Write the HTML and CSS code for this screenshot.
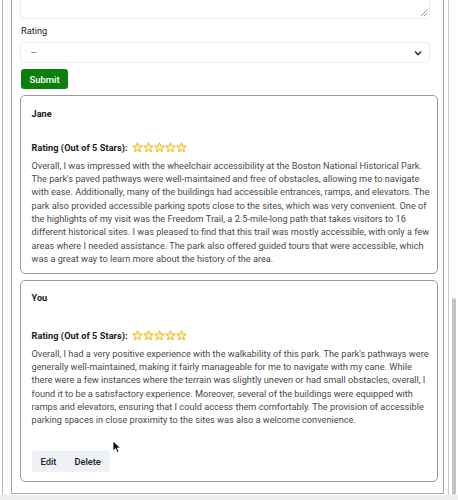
FILE: index.html
```html
<!DOCTYPE html>
<html>
<head>
<meta charset="utf-8">
<link rel="stylesheet" href="styles.css">
</head>
<body>
<div class="window">
  <div class="panel">
    <div class="container">
      <div class="field">
        <div class="textarea"><span class="grip"></span></div>
      </div>
      <label class="label">Rating</label>
      <div class="select">
        <span>--</span>
        <svg class="chev" width="8" height="6" viewBox="0 0 8 6"><path d="M1 1.5 L4 4.5 L7 1.5" fill="none" stroke="#333" stroke-width="1.6"/></svg>
      </div>
      <button class="submit">Submit</button>

      <div class="review">
        <div class="name">Jane</div>
        <div class="rating">Rating (Out of 5 Stars): <span class="stars">
          <svg viewBox="0 0 12 12"><path d="M6 0.8 L7.5 4.2 L11.2 4.5 L8.4 7 L9.2 10.7 L6 8.8 L2.8 10.7 L3.6 7 L0.8 4.5 L4.5 4.2 Z"/></svg><svg viewBox="0 0 12 12"><path d="M6 0.8 L7.5 4.2 L11.2 4.5 L8.4 7 L9.2 10.7 L6 8.8 L2.8 10.7 L3.6 7 L0.8 4.5 L4.5 4.2 Z"/></svg><svg viewBox="0 0 12 12"><path d="M6 0.8 L7.5 4.2 L11.2 4.5 L8.4 7 L9.2 10.7 L6 8.8 L2.8 10.7 L3.6 7 L0.8 4.5 L4.5 4.2 Z"/></svg><svg viewBox="0 0 12 12"><path d="M6 0.8 L7.5 4.2 L11.2 4.5 L8.4 7 L9.2 10.7 L6 8.8 L2.8 10.7 L3.6 7 L0.8 4.5 L4.5 4.2 Z"/></svg><svg viewBox="0 0 12 12"><path d="M6 0.8 L7.5 4.2 L11.2 4.5 L8.4 7 L9.2 10.7 L6 8.8 L2.8 10.7 L3.6 7 L0.8 4.5 L4.5 4.2 Z"/></svg>
        </span></div>
        <p class="text">Overall, I was impressed with the wheelchair accessibility at the Boston National Historical Park.<br>The park's paved pathways were well-maintained and free of obstacles, allowing me to navigate<br>with ease. Additionally, many of the buildings had accessible entrances, ramps, and elevators. The<br>park also provided accessible parking spots close to the sites, which was very convenient. One of<br>the highlights of my visit was the Freedom Trail, a 2.5-mile-long path that takes visitors to 16<br>different historical sites. I was pleased to find that this trail was mostly accessible, with only a few<br>areas where I needed assistance. The park also offered guided tours that were accessible, which<br>was a great way to learn more about the history of the area.</p>
      </div>

      <div class="review review--own">
        <div class="name">You</div>
        <div class="rating">Rating (Out of 5 Stars): <span class="stars">
          <svg viewBox="0 0 12 12"><path d="M6 0.8 L7.5 4.2 L11.2 4.5 L8.4 7 L9.2 10.7 L6 8.8 L2.8 10.7 L3.6 7 L0.8 4.5 L4.5 4.2 Z"/></svg><svg viewBox="0 0 12 12"><path d="M6 0.8 L7.5 4.2 L11.2 4.5 L8.4 7 L9.2 10.7 L6 8.8 L2.8 10.7 L3.6 7 L0.8 4.5 L4.5 4.2 Z"/></svg><svg viewBox="0 0 12 12"><path d="M6 0.8 L7.5 4.2 L11.2 4.5 L8.4 7 L9.2 10.7 L6 8.8 L2.8 10.7 L3.6 7 L0.8 4.5 L4.5 4.2 Z"/></svg><svg viewBox="0 0 12 12"><path d="M6 0.8 L7.5 4.2 L11.2 4.5 L8.4 7 L9.2 10.7 L6 8.8 L2.8 10.7 L3.6 7 L0.8 4.5 L4.5 4.2 Z"/></svg><svg viewBox="0 0 12 12"><path d="M6 0.8 L7.5 4.2 L11.2 4.5 L8.4 7 L9.2 10.7 L6 8.8 L2.8 10.7 L3.6 7 L0.8 4.5 L4.5 4.2 Z"/></svg>
        </span></div>
        <p class="text">Overall, I had a very positive experience with the walkability of this park. The park's pathways were<br>generally well-maintained, making it fairly manageable for me to navigate with my cane. While<br>there were a few instances where the terrain was slightly uneven or had small obstacles, overall, I<br>found it to be a satisfactory experience. Moreover, several of the buildings were equipped with<br>ramps and elevators, ensuring that I could access them comfortably. The provision of accessible<br>parking spaces in close proximity to the sites was also a welcome convenience.</p>
        <div class="actions">
          <button class="btn">Edit</button><button class="btn">Delete</button>
        </div>
        <svg class="cursor" width="10" height="14" viewBox="0 0 10 14"><path d="M1 1 L1 11 L3.5 8.6 L5.3 12.6 L7 11.8 L5.3 8 L8.6 8 Z" fill="#111" stroke="#fff" stroke-width="0.8"/></svg>
      </div>
    </div>
  </div>
  <div class="scroll"><div class="thumb"></div></div>
</div>
<div class="bottom"></div>
</body>
</html>
```

FILE: styles.css
```css
* { box-sizing: border-box; }
html, body { margin: 0; padding: 0; background: #fff; }
body {
  width: 458px;
  height: 500px;
  overflow: hidden;
  font-family: Roboto, "Liberation Sans", sans-serif;
  font-size: 9.2px;
  line-height: 13.33px;
  color: #222;
}
.window {
  display: flex;
  height: 495px;
  padding-left: 2px;
}
.panel {
  width: 448px;
  border-left: 1px solid #b5b5b5;
  border-right: 1px solid #c8c8c8;
  padding-left: 8px;
  overflow: hidden;
}
.container {
  width: 433px;
  margin-top: -40px;
  height: 534px;
  border: 1px solid #a8a8a8;
  border-top: none;
  padding: 0 5px 0 8px;
}
.textarea {
  position: relative;
  width: 410px;
  height: 59px;
  border: 1px solid #ececec;
  border-radius: 4px;
}
.grip {
  position: absolute;
  right: 2px;
  bottom: 2px;
  width: 6px;
  height: 6px;
  background: linear-gradient(135deg, transparent 45%, #999 45%, #999 55%, transparent 55%, transparent 70%, #999 70%, #999 80%, transparent 80%);
}
.label {
  display: block;
  margin: 5px 0 0 1px;
  color: #222;
}
.select {
  display: flex;
  align-items: center;
  justify-content: space-between;
  width: 410px;
  height: 21px;
  margin-top: 5px;
  padding: 0 7px 0 10px;
  border: 1px solid #ededed;
  border-radius: 4px;
  color: #777;
  font-size: 10px;
}
.submit {
  display: block;
  margin: 6px 0 0 1px;
  width: 47px;
  height: 20px;
  padding: 0;
  border: none;
  border-radius: 3px;
  background: #0b7f0b;
  color: #fff;
  font-family: inherit;
  font-size: 9.5px;
  font-weight: 500;
}
.review {
  position: relative;
  width: 418px;
  margin-top: 6px;
  border: 1.5px solid #9a9a9a;
  border-radius: 5px;
  padding: 10.5px 4px 8px 10.5px;
}
.review--own { margin-top: 5.5px; padding-top: 10px; padding-bottom: 9.5px; }
.name { font-weight: 700; color: #1a1a1a; }
.rating {
  display: flex;
  align-items: center;
  margin-top: 20.6px;
  font-weight: 700;
  color: #1a1a1a;
  letter-spacing: 0.05px;
}
.review--own .rating { margin-top: 24.6px; }
.stars { display: inline-flex; margin-left: 4px; }
.stars svg {
  width: 11px;
  height: 11px;
  fill: #fff2b0;
  stroke: #e6a800;
  stroke-width: 0.9;
  stroke-linejoin: round;
}
.text {
  margin: 4.6px 0 0;
  color: #4a4a4a;
  white-space: nowrap;
}
.actions {
  display: inline-flex;
  margin-top: 24px;
  background: #eef1f5;
  border-radius: 3px;
}
.btn {
  height: 21px;
  border: none;
  background: transparent;
  font-family: inherit;
  font-size: 9.3px;
  font-weight: 500;
  color: #222;
  padding: 0 9px;
}
.cursor {
  position: absolute;
  left: 91px;
  top: 159px;
}
.scroll {
  position: relative;
  width: 9px;
  padding-top: 298px;
  padding-left: 3px;
}
.thumb {
  width: 4px;
  height: 197px;
  background: #c4c4c4;
  border-radius: 2px;
}
.bottom {
  height: 5px;
  background: #eeeeee;
}
```
